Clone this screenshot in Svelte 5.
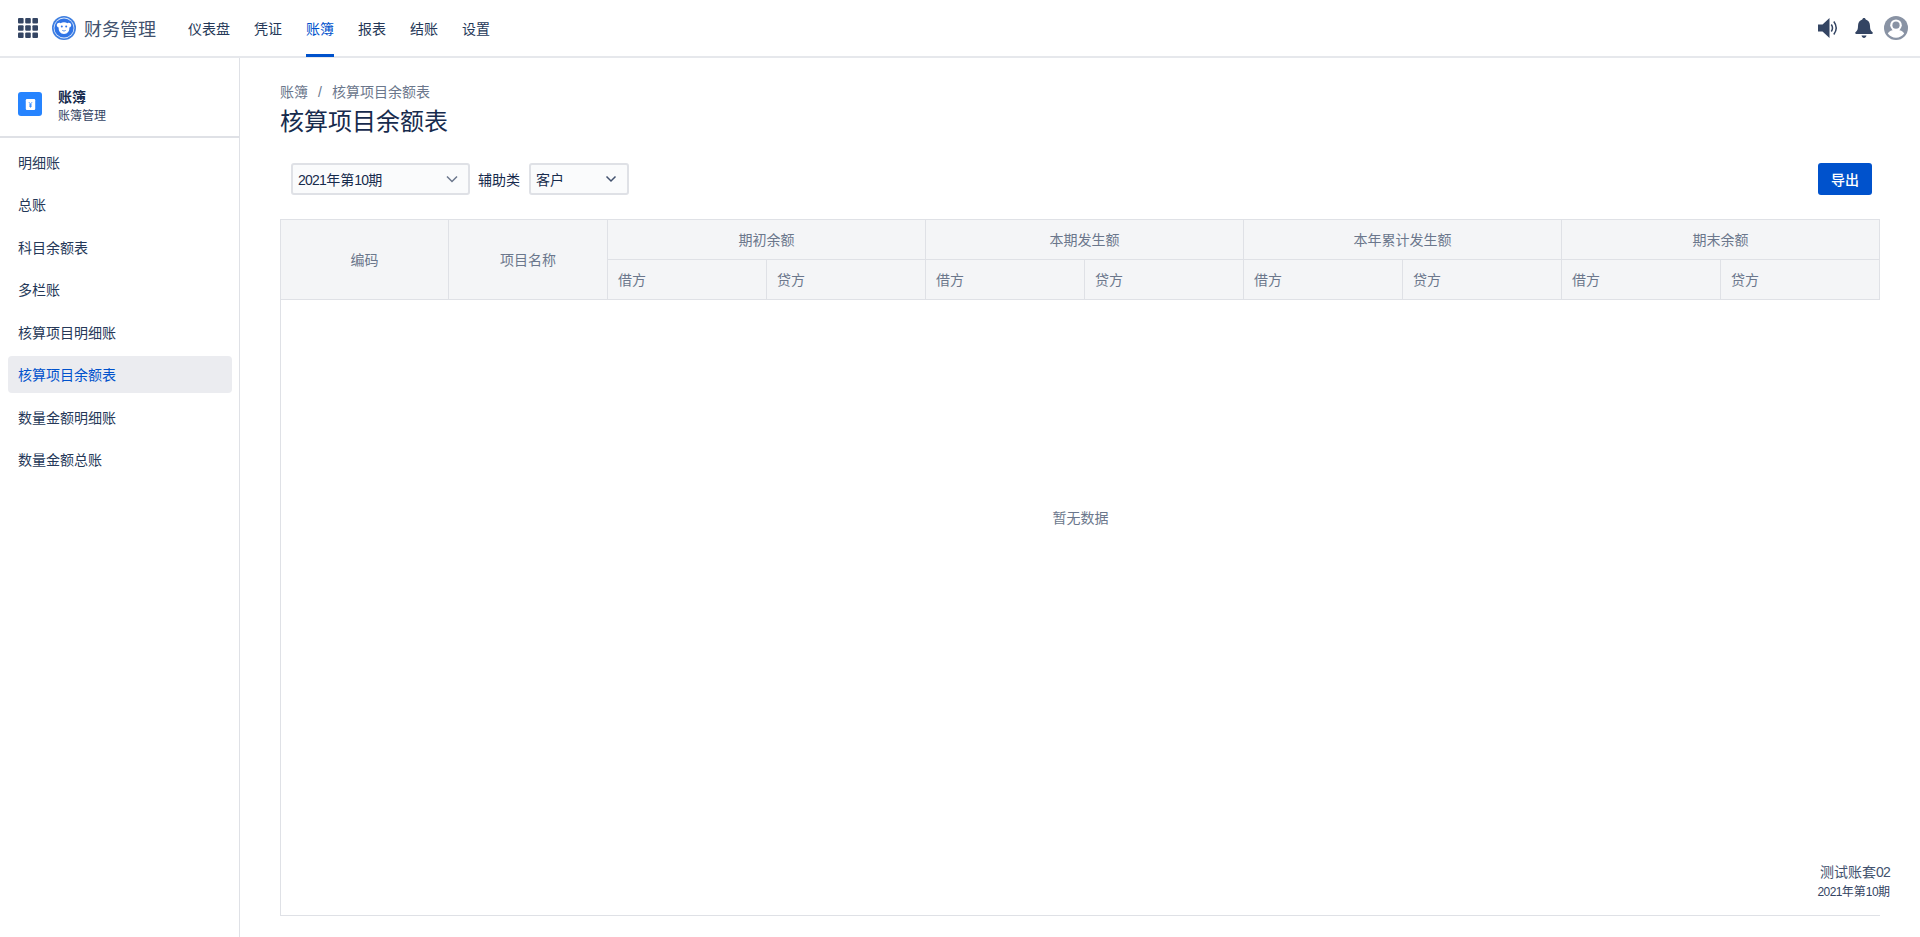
<script>
  const topNav = ['仪表盘', '凭证', '账簿', '报表', '结账', '设置'];
  const sideNav = ['明细账', '总账', '科目余额表', '多栏账', '核算项目明细账', '核算项目余额表', '数量金额明细账', '数量金额总账'];
  const groups = ['期初余额', '本期发生额', '本年累计发生额', '期末余额'];
</script>

<div class="page">
  <header class="topbar">
    <svg class="apps" width="20" height="20" viewBox="0 0 20 20" fill="#344563">
      {#each [0, 7.2, 14.4] as y}
        {#each [0, 7.2, 14.4] as x}
          <rect x={x} y={y} width="5.6" height="5.6" rx="1" />
        {/each}
      {/each}
    </svg>
    <svg class="logo" width="24" height="24" viewBox="0 0 24 24">
      <circle cx="12" cy="12" r="12" fill="#3f7fe0" />
      <circle cx="12" cy="12" r="10.400" fill="#dce8fb" />
      <circle cx="12" cy="12" r="9.600" fill="#2f74e6" />
      <path d="M4.800 8.800c.3-1.800 2.300-2.500 3.700-1.500 2.100-1.300 4.900-1.300 7 0 1.400-1 3.400-.3 3.700 1.500.2 1.400-.7 2.500-1.900 2.700.4 3.300-1.700 6.500-5.300 6.500s-5.700-3.200-5.300-6.500c-1.200-.2-2.100-1.300-1.900-2.700z" fill="#fff" />
      <circle cx="9.800" cy="10.600" r="1" fill="#2f74e6" />
      <circle cx="14.200" cy="10.600" r="1" fill="#2f74e6" />
      <path d="M10.300 14.400c1 .7 2.400.7 3.400 0" fill="none" stroke="#2f74e6" stroke-width=".8" />
    </svg>
    <span class="brand">财务管理</span>
    <nav class="topnav">
      {#each topNav as item}
        <a class:active={item === '账簿'}>{item}</a>
      {/each}
    </nav>
    <div class="tools">
      <svg width="20" height="20" viewBox="0 0 20 20">
        <path d="M0 6.500h4.500L11.500 0v20l-7-6.500H0z" fill="#344563" />
        <path d="M13.300 6.500c1.500 2.200 1.500 4.800 0 7M15.800 3.500c3 4 3 9 0 13" fill="none" stroke="#344563" stroke-width="1.500" />
      </svg>
      <svg class="bell" width="18" height="20" viewBox="0 0 18 20" fill="#344563">
        <path d="M9 0c1 0 1.600.7 1.700 1.600 2.800.8 4.300 3.200 4.300 6.400 0 3 .6 4.600 2.500 6.300.6.600.3 1.700-.6 1.700H1.100c-.9 0-1.200-1.100-.6-1.700C2.400 12.600 3 11 3 8c0-3.200 1.500-5.600 4.300-6.400C7.400.7 8 0 9 0z" />
        <path d="M6.500 17.500h5C11.200 19 10.200 20 9 20s-2.200-1-2.500-2.500z" />
      </svg>
      <svg class="avatar" width="24" height="24" viewBox="0 0 24 24">
        <circle cx="12" cy="12" r="12" fill="#8993a4" />
        <circle cx="12" cy="9.200" r="5.800" fill="#fff" />
        <circle cx="12" cy="9.200" r="3.600" fill="#8993a4" />
        <path d="M3.800 17.500c1-2.300 4-3.700 8.200-3.700s7.200 1.400 8.200 3.700c-1.900 2.600-4.900 4.200-8.200 4.200s-6.300-1.600-8.200-4.200z" fill="#fff" />
      </svg>
    </div>
  </header>

  <div class="body">
    <aside class="sidebar">
      <div class="side-head">
        <span class="side-icon">
          <svg viewBox="0 0 14 14">
            <rect x="1" y="0" width="12" height="14" rx="1.500" fill="#fff" />
            <path d="M5 4l2 2.500L9 4M7 6.500V11M5.200 7.500h3.600M5.200 9.200h3.600" fill="none" stroke="#2684ff" stroke-width="1" />
          </svg>
        </span>
        <div class="side-text">
          <div class="side-title">账簿</div>
          <div class="side-sub">账簿管理</div>
        </div>
      </div>
      <nav class="sidenav">
        {#each sideNav as item}
          <a class:current={item === '核算项目余额表'}>{item}</a>
        {/each}
      </nav>
    </aside>

    <main class="content">
      <div class="crumbs"><span>账簿</span><span class="sep">/</span><span>核算项目余额表</span></div>
      <h1>核算项目余额表</h1>

      <div class="toolbar">
        <div class="select period">
          <span><span class="num">2021</span>年第<span class="num">10</span>期</span>
          <svg width="12" height="8" viewBox="0 0 12 8"><path d="M1 1.500l5 5 5-5" fill="none" stroke="#6b778c" stroke-width="1.500" /></svg>
        </div>
        <span class="label">辅助类</span>
        <div class="select kind">
          <span>客户</span>
          <svg width="12" height="8" viewBox="0 0 12 8"><path d="M1.500 1.500l4.500 4.500 4.500-4.500" fill="none" stroke="#42526e" stroke-width="1.500" /></svg>
        </div>
        <button class="export">导出</button>
      </div>

      <div class="table-wrap">
        <table>
          <colgroup>
            <col class="c-code" />
            <col class="c-name" />
            {#each Array(8) as _}<col />{/each}
          </colgroup>
          <thead>
            <tr>
              <th rowspan="2">编码</th>
              <th rowspan="2">项目名称</th>
              {#each groups as g}<th colspan="2">{g}</th>{/each}
            </tr>
            <tr>
              {#each groups as g}
                <th class="sub">借方</th>
                <th class="sub">贷方</th>
              {/each}
            </tr>
          </thead>
        </table>
        <div class="empty">暂无数据</div>
      </div>
    </main>
  </div>

  <div class="account">
    <div class="acc-name">测试账套<span class="num">02</span></div>
    <div class="acc-period"><span class="num">2021</span>年第<span class="num">10</span>期</div>
  </div>
</div>

<style>
  :global(body) {
    margin: 0;
    background: #fff;
    font-family: "Liberation Sans", "Noto Sans CJK SC", sans-serif;
    color: #172b4d;
  }
  .page {
    position: relative;
    height: 937px;
    display: flex;
    flex-direction: column;
    overflow: hidden;
  }
  .topbar {
    height: 56px;
    flex: none;
    display: flex;
    align-items: center;
    padding: 0 12px 0 18px;
    border-bottom: 2px solid #e6e8ec;
    box-sizing: content-box;
  }
  .logo { margin-left: 14px; }
  .brand {
    margin-left: 8px;
    font-size: 18px;
    color: #42526e;
  }
  .topnav {
    display: flex;
    gap: 24px;
    margin-left: 32px;
    height: 56px;
  }
  .topnav a {
    font-size: 14px;
    line-height: 58px;
    color: #253858;
    position: relative;
    height: 58px;
  }
  .topnav a.active { color: #0052cc; }
  .topnav a.active::after {
    content: '';
    position: absolute;
    left: 0;
    right: 0;
    top: 54px;
    height: 3px;
    background: #0052cc;
  }
  .tools {
    margin-left: auto;
    display: flex;
    align-items: center;
  }
  .bell { margin-left: 17px; }
  .avatar { margin-left: 11px; }
  .body {
    flex: 1;
    display: flex;
    min-height: 0;
  }
  .sidebar {
    width: 240px;
    flex: none;
    box-sizing: border-box;
    border-right: 1px solid #dfe1e6;
  }
  .side-head {
    height: 80px;
    box-sizing: border-box;
    border-bottom: 2px solid #dfe1e6;
    display: flex;
    align-items: center;
    padding: 14px 0 0 18px;
    gap: 16px;
  }
  .side-icon {
    width: 24px;
    height: 24px;
    border-radius: 3px;
    background: #2684ff;
    display: flex;
    align-items: center;
    justify-content: center;
  }
  .side-icon svg { width: 11px; height: 11px; }
  .side-text { padding-top: 3px; }
  .side-title {
    font-size: 14px;
    font-weight: 600;
    line-height: 20px;
    color: #172b4d;
  }
  .side-sub {
    margin-top: 1px;
    font-size: 12px;
    line-height: 16px;
    color: #344563;
  }
  .sidenav {
    display: flex;
    flex-direction: column;
    gap: 5.500px;
    padding: 5.500px 7px 0 8px;
  }
  .sidenav a {
    height: 37px;
    line-height: 38px;
    padding-left: 10px;
    font-size: 14px;
    color: #253858;
    border-radius: 4px;
  }
  .sidenav a.current {
    background: #ebecf0;
    color: #0052cc;
  }
  .content {
    flex: 1;
    min-width: 0;
    padding: 24px 40px 0;
  }
  .crumbs {
    display: flex;
    font-size: 14px;
    line-height: 20px;
    color: #6b778c;
  }
  .sep { margin: 0 10px; }
  h1 {
    margin: 2px 0 0;
    font-size: 24px;
    font-weight: 400;
    line-height: 36px;
    color: #172b4d;
  }
  .toolbar {
    display: flex;
    align-items: center;
    margin-top: 23px;
    height: 32px;
    padding: 0 8px 0 11px;
  }
  .select {
    height: 32px;
    box-sizing: border-box;
    border: 2px solid #dfe1e6;
    border-radius: 3px;
    background: #fafbfc;
    display: flex;
    align-items: center;
    justify-content: space-between;
    font-size: 14px;
    color: #172b4d;
    padding: 0 10px 0 5px;
  }
  .period { width: 179px; }
  .kind { width: 100px; }
  .num { letter-spacing: -0.75px; }
  .label {
    font-size: 14px;
    color: #172b4d;
    margin: 0 9px 0 8px;
  }
  .export {
    margin-left: auto;
    width: 54px;
    height: 32px;
    border: 0;
    border-radius: 3px;
    background: #0052cc;
    color: #fff;
    font: 500 14px "Liberation Sans", "Noto Sans CJK SC", sans-serif;
    padding: 0;
  }
  .table-wrap {
    margin-top: 24px;
    height: 697px;
    box-sizing: border-box;
    border-left: 1px solid #dfe1e6;
    border-bottom: 1px solid #dfe1e6;
    display: flex;
    flex-direction: column;
  }
  table {
    width: 100%;
    table-layout: fixed;
    border-collapse: separate;
    border-spacing: 0;
    background: #f4f5f7;
    border-top: 1px solid #dfe1e6;
    flex: none;
  }
  .c-code { width: 168px; }
  .c-name { width: 159px; }
  th {
    height: 40px;
    padding: 0 0 2px;
    font-size: 14px;
    font-weight: 400;
    color: #6b778c;
    text-align: center;
    border-right: 1px solid #dfe1e6;
    border-bottom: 1px solid #dfe1e6;
    box-sizing: border-box;
  }
  th.sub {
    text-align: left;
    padding-left: 10px;
  }
  .empty {
    flex: 1;
    display: flex;
    align-items: center;
    justify-content: center;
    font-size: 14px;
    color: #6b778c;
    padding-bottom: 182px;
  }
  .account {
    position: absolute;
    right: 30px;
    top: 862px;
    text-align: right;
    color: #344563;
  }
  .acc-name {
    font-size: 14px;
    line-height: 20px;
    color: #42526e;
  }
  .acc-period {
    font-size: 12px;
    line-height: 20px;
  }
  .acc-period .num { letter-spacing: -0.6px; }
</style>
